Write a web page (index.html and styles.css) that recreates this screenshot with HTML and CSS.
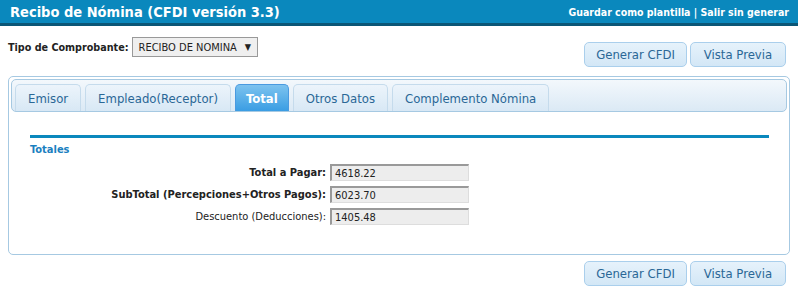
FILE: index.html
```html
<!DOCTYPE html>
<html lang="es">
<head>
    <meta charset="UTF-8">
    <title>Recibo de Nómina</title>
    <link rel="stylesheet" href="styles.css">
</head>
<body>
<div class="top-bar">
    <h1>Recibo de Nómina (CFDI versión 3.3)</h1>
    <div class="top-links"><a href="#">Guardar como plantilla</a> | <a href="#">Salir sin generar</a></div>
</div>

<div class="toolbar">
    <div class="tipo">
        <label for="tipo">Tipo de Comprobante:</label>
        <div class="select" id="tipo">RECIBO DE NOMINA <span class="arrow">&#9660;</span></div>
    </div>
    <div class="actions">
        <button class="btn">Generar CFDI</button>
        <button class="btn">Vista Previa</button>
    </div>
</div>

<div class="panel">
    <ul class="tabs">
        <li>Emisor</li>
        <li>Empleado(Receptor)</li>
        <li class="active">Total</li>
        <li>Otros Datos</li>
        <li>Complemento Nómina</li>
    </ul>
    <div class="tab-body">
        <div class="section-title">Totales</div>
        <div class="form-row">
            <label class="strong">Total a Pagar:</label>
            <input type="text" value="4618.22" readonly>
        </div>
        <div class="form-row">
            <label class="strong">SubTotal (Percepciones+Otros Pagos):</label>
            <input type="text" value="6023.70" readonly>
        </div>
        <div class="form-row">
            <label>Descuento (Deducciones):</label>
            <input type="text" value="1405.48" readonly>
        </div>
    </div>
</div>

<div class="actions bottom">
    <button class="btn">Generar CFDI</button>
    <button class="btn">Vista Previa</button>
</div>
</body>
</html>
```

FILE: styles.css
```css
body {
    margin: 0;
    font-family: "DejaVu Sans Condensed", "DejaVu Sans", sans-serif;
    font-size: 11px;
    color: #222;
    background: #fff;
}

.top-bar {
    display: flex;
    justify-content: space-between;
    align-items: center;
    height: 23px;
    padding: 0 9px 0 10px;
    background: #0a88bd;
    border-bottom: 3px solid #0b5676;
    color: #fff;
}

.top-bar h1 {
    margin: 0;
    font-size: 14.5px;
    font-weight: bold;
}

.top-links {
    font-size: 10.5px;
    font-weight: bold;
}

.top-links a {
    color: #fff;
    text-decoration: none;
}

.toolbar {
    display: flex;
    justify-content: space-between;
    align-items: flex-start;
    padding: 11px 12px 0 8px;
}

.tipo {
    display: flex;
    align-items: center;
    gap: 3px;
    font-weight: bold;
    font-size: 10.7px;
}

.select {
    display: flex;
    align-items: center;
    gap: 8px;
    height: 18px;
    padding: 0 6px;
    border: 1px solid #999;
    background: #efefef;
    font-weight: normal;
    font-size: 11px;
}

.arrow {
    font-size: 9px;
}

.actions {
    display: flex;
    gap: 3px;
    margin-top: 5px;
}

.actions.bottom {
    justify-content: flex-end;
    margin: 6px 12px 0 0;
}

.btn {
    height: 25px;
    padding: 0;
    border: 1px solid #aacfec;
    border-radius: 5px;
    background: linear-gradient(#e6f2fb, #d3e7f6);
    color: #2a6796;
    font-family: inherit;
    font-size: 13px;
}

.btn:first-child {
    width: 103px;
}

.btn:last-child {
    width: 96px;
}

.panel {
    margin: 9px 8px 0 8px;
    height: 173px;
    padding: 2px;
    border: 1px solid #a6c9e2;
    border-radius: 5px;
}

.tabs {
    display: flex;
    gap: 4px;
    margin: 0;
    height: 27px;
    padding: 4px 3px 0 3px;
    list-style: none;
    border: 1px solid #a6c9e2;
    border-radius: 5px;
    background: linear-gradient(#f3f8fc, #dbe9f5);
}

.tabs li {
    display: flex;
    align-items: center;
    padding: 0 12px;
    border: 1px solid #c5dbec;
    border-bottom: none;
    border-radius: 5px 5px 0 0;
    background: linear-gradient(#ecf4fb, #d8e8f5);
    color: #2a6796;
    font-size: 13px;
}

.tabs li.active {
    padding: 0 10px;
    border-color: #4a9ae0;
    background: linear-gradient(#7dc3ef, #3a9de3);
    color: #fff;
    font-weight: bold;
}

.tab-body {
    padding: 23px 18px 0 19px;
}

.section-title {
    border-top: 3px solid #0a88bd;
    padding-top: 5px;
    color: #1a80c0;
    font-weight: bold;
}

.form-row {
    display: flex;
    align-items: center;
    margin-top: 5px;
}

.section-title + .form-row {
    margin-top: 8px;
}

.form-row label {
    width: 296px;
    text-align: right;
    padding-right: 4px;
}

.form-row label.strong {
    font-weight: bold;
}

.form-row input {
    width: 130px;
    height: 12px;
    padding: 1px 3px;
    border: 1px solid #ddd;
    border-top: 2px solid #999;
    border-left: 2px solid #999;
    background: #ededed;
    font-family: inherit;
    font-size: 11px;
    color: #222;
}
```
